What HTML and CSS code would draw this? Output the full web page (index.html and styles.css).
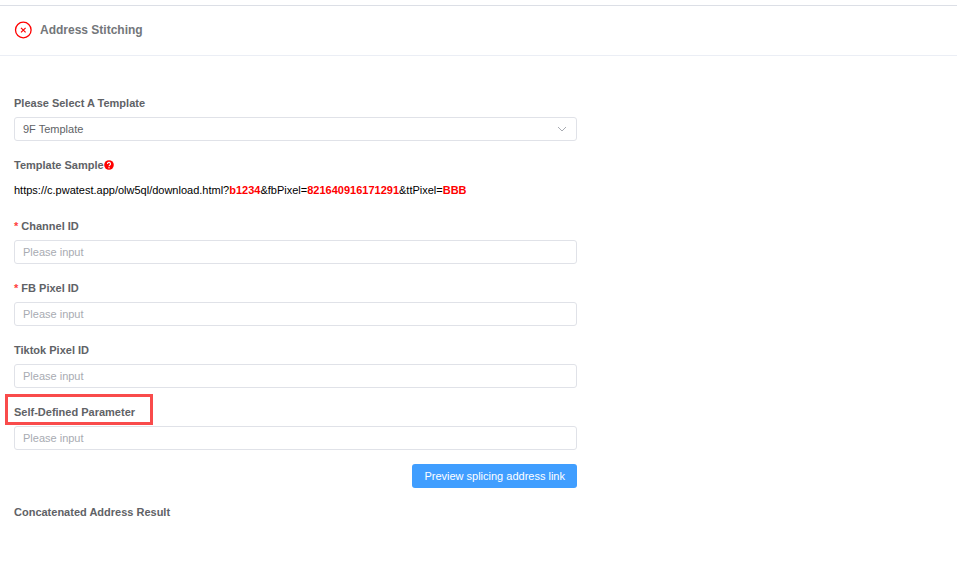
FILE: index.html
```
<!DOCTYPE html>
<html lang="en">
<head>
    <meta charset="UTF-8">
    <meta name="viewport" content="width=device-width, initial-scale=1.0">
    <title>Address Stitching</title>
    <link rel="stylesheet" href="styles.css">
</head>
<body>
    <header class="header">
        <button type="button" class="close" aria-label="Close">
            <svg width="18" height="18" viewBox="0 0 18 18" fill="none" stroke="#ff0000">
                <circle cx="9.3" cy="9" r="7.8" stroke-width="1.3"/>
                <path d="M7 6.8l4.6 4.6M11.6 6.8l-4.6 4.6" stroke-width="1.2"/>
            </svg>
        </button>
        <h1>Address Stitching</h1>
    </header>

    <form class="form">
        <div class="field">
            <label for="template">Please Select A Template</label>
            <div class="select">
                <select id="template">
                    <option>9F Template</option>
                </select>
                <svg class="arrow" width="10" height="6" viewBox="0 0 10 6" fill="none" stroke="#a8abb2">
                    <path d="M1 1l4 4 4-4"/>
                </svg>
            </div>
        </div>

        <div class="field">
            <h2>Template Sample<svg class="help" width="10" height="10" viewBox="0 0 10 10">
                <circle cx="5" cy="5" r="4.8" fill="#ff0000"/>
                <path d="M3.5 4a1.5 1.5 0 1 1 2.2 1.2q-.7.4-.7 1.1" fill="none" stroke="#fff" stroke-width="1.1"/>
                <circle cx="5" cy="7.7" r=".7" fill="#fff"/>
            </svg></h2>
            <p class="sample">https://c.pwatest.app/olw5ql/download.html?<b>b1234</b>&amp;fbPixel=<b>821640916171291</b>&amp;ttPixel=<b>BBB</b></p>
        </div>

        <div class="field">
            <label for="channel" class="required">Channel ID</label>
            <input type="text" id="channel" placeholder="Please input" required>
        </div>

        <div class="field">
            <label for="fb-pixel" class="required">FB Pixel ID</label>
            <input type="text" id="fb-pixel" placeholder="Please input" required>
        </div>

        <div class="field">
            <label for="tiktok-pixel">Tiktok Pixel ID</label>
            <input type="text" id="tiktok-pixel" placeholder="Please input">
        </div>

        <div class="field">
            <label for="custom" class="marked">Self-Defined Parameter</label>
            <input type="text" id="custom" placeholder="Please input">
        </div>

        <button type="button" class="preview">Preview splicing address link</button>

        <h2>Concatenated Address Result</h2>
    </form>
</body>
</html>
```

FILE: styles.css
```
* {
    box-sizing: border-box;
}
body {
    margin: 0;
    padding-top: 5px;
    background-color: #fff;
    color: #606266;
    font-family: "Liberation Sans", Arial, sans-serif;
    font-size: 11px;
}
input, select, button {
    font: inherit;
}
.header {
    display: flex;
    align-items: center;
    gap: 8px;
    padding: 14px 14px 15px;
    border-top: 1px solid #dcdfe6;
    border-bottom: 1px solid #ebeef5;
}
.header h1 {
    margin: 0;
    color: #73767a;
    font-size: 12px;
    line-height: 20px;
}
.close {
    display: flex;
    padding: 0;
    border: none;
    background: none;
    cursor: pointer;
}
.form {
    display: flex;
    flex-direction: column;
    gap: 14px;
    max-width: 591px;
    padding: 37px 14px;
}
.field {
    display: flex;
    flex-direction: column;
    align-items: flex-start;
    gap: 4px;
}
label, h2 {
    margin: 0;
    font-size: 11px;
    font-weight: bold;
    line-height: 20px;
}
input, select {
    width: 100%;
    height: 24px;
    padding: 0 8px;
    border: 1px solid #e0e2e8;
    border-radius: 3px;
    background-color: #fff;
    color: #606266;
}
input::placeholder {
    color: #a8abb2;
}
.select {
    position: relative;
    width: 100%;
}
select {
    display: block;
    appearance: none;
}
.arrow {
    position: absolute;
    top: 9px;
    right: 10px;
    pointer-events: none;
}
.help {
    vertical-align: -1px;
}
.sample {
    margin: 0;
    color: #000;
    line-height: 23px;
}
.sample b {
    color: #ff0000;
}
.required::before {
    content: "* ";
    color: #ff4040;
}
/* red frame drawn round the label */
.marked {
    position: relative;
}
.marked::after {
    content: "";
    position: absolute;
    inset: -8px -18px -3px -9px;
    border: 3px solid #f94b4b;
}
.preview {
    align-self: flex-end;
    height: 24px;
    padding: 0 12px;
    border: none;
    border-radius: 3px;
    background-color: #409eff;
    color: #fff;
    cursor: pointer;
}
```
